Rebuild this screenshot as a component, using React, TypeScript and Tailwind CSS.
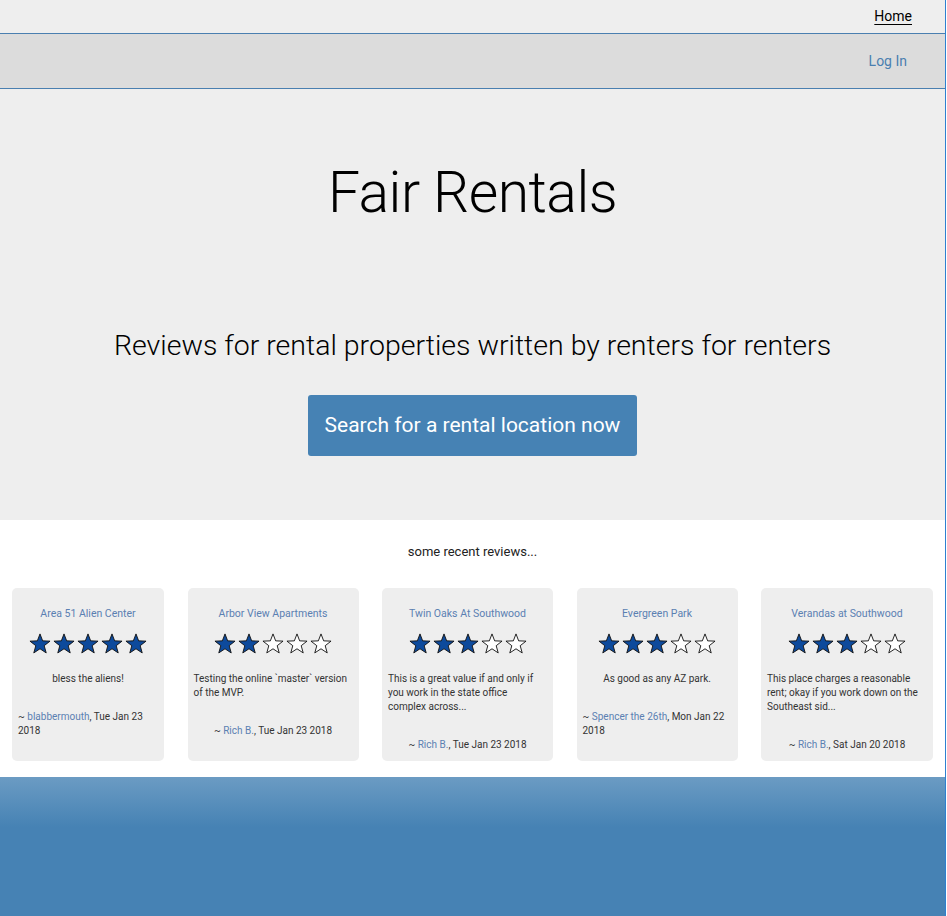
import React from "react";

type Review = {
  place: string;
  stars: number;
  text: string;
  author: string;
  date: string;
  width: string;
};

const reviews: Review[] = [
  { place: "Area 51 Alien Center", stars: 5, text: "bless the aliens!", author: "blabbermouth", date: "Tue Jan 23 2018", width: "w-[152px]" },
  { place: "Arbor View Apartments", stars: 2, text: "Testing the online `master` version of the MVP.", author: "Rich B.", date: "Tue Jan 23 2018", width: "w-[171px]" },
  { place: "Twin Oaks At Southwood", stars: 3, text: "This is a great value if and only if you work in the state office complex across...", author: "Rich B.", date: "Tue Jan 23 2018", width: "w-[171px]" },
  { place: "Evergreen Park", stars: 3, text: "As good as any AZ park.", author: "Spencer the 26th", date: "Mon Jan 22 2018", width: "w-[161px]" },
  { place: "Verandas at Southwood", stars: 3, text: "This place charges a reasonable rent; okay if you work down on the Southeast sid...", author: "Rich B.", date: "Sat Jan 20 2018", width: "w-[172px]" },
];

function Star({ filled }: { filled: boolean }) {
  return (
    <svg width="22" height="21" viewBox="0 0 24 23" className="block">
      <polygon
        points="12,1 14.9,8.6 23,8.9 16.6,13.9 18.8,21.8 12,17.3 5.2,21.8 7.4,13.9 1,8.9 9.1,8.6"
        fill={filled ? "#0d4a9c" : "#ffffff"}
        stroke="#111"
        strokeWidth="1"
        strokeLinejoin="round"
      />
    </svg>
  );
}

function ReviewCard({ review }: { review: Review }) {
  return (
    <div className={`${review.width} bg-[#eeeeee] rounded-[5px] px-[6px] pt-[19px] pb-[9px] flex flex-col text-[10px] leading-[14px] text-[#333]`}>
      <div className="text-center text-[#5b80b2] text-[10.5px]">{review.place}</div>
      <div className="flex justify-center gap-[2px] mt-[12px]">
        {[1, 2, 3, 4, 5].map((n) => (
          <Star key={n} filled={n <= review.stars} />
        ))}
      </div>
      <div className="text-center mt-[18px]">
        <div className="inline-block text-left">{review.text}</div>
      </div>
      <div className="text-center mt-[24px]">
        <div className="inline-block text-left">
          ~ <span className="text-[#5b80b2]">{review.author}</span>, {review.date}
        </div>
      </div>
    </div>
  );
}

export default function App() {
  return (
    <div className="min-h-screen flex flex-col bg-white font-['Roboto',sans-serif]">
      <div className="mr-px border-r border-[#2f80d0] flex flex-col flex-1">
        <div className="h-[34px] bg-[#eeeeee] border-b border-[#4a7fb0] flex items-center justify-end pr-[33px]">
          <a className="text-[14px] text-black underline underline-offset-[3px]">Home</a>
        </div>
        <div className="h-[55px] bg-[#dcdcdc] border-b border-[#4a7fb0] flex items-center justify-end pr-[38px]">
          <a className="text-[14px] text-[#4a7fb0]">Log In</a>
        </div>
        <div className="h-[431px] bg-[#eeeeee] flex flex-col items-center">
          <h1 className="mt-[64px] text-[57px] leading-[80px] font-light tracking-[-0.5px] text-black">Fair Rentals</h1>
          <h2 className="mt-[95px] text-[28.5px] leading-[36px] font-light text-black">
            Reviews for rental properties written by renters for renters
          </h2>
          <button className="mt-[31px] h-[61px] px-[17px] bg-[#4682b4] text-white text-[21px] rounded-[3px]">
            Search for a rental location now
          </button>
        </div>
        <div className="bg-white pb-[16px]">
          <div className="text-center text-[13px] text-[#222] pt-[23px] leading-[18px]">some recent reviews...</div>
          <div className="flex items-stretch justify-between px-[12px] mt-[27px]">
            {reviews.map((r) => (
              <ReviewCard key={r.place} review={r} />
            ))}
          </div>
        </div>
        <div className="flex-1 bg-[linear-gradient(to_bottom,#6b9bc3,#4682b4_50px)]" />
      </div>
    </div>
  );
}
